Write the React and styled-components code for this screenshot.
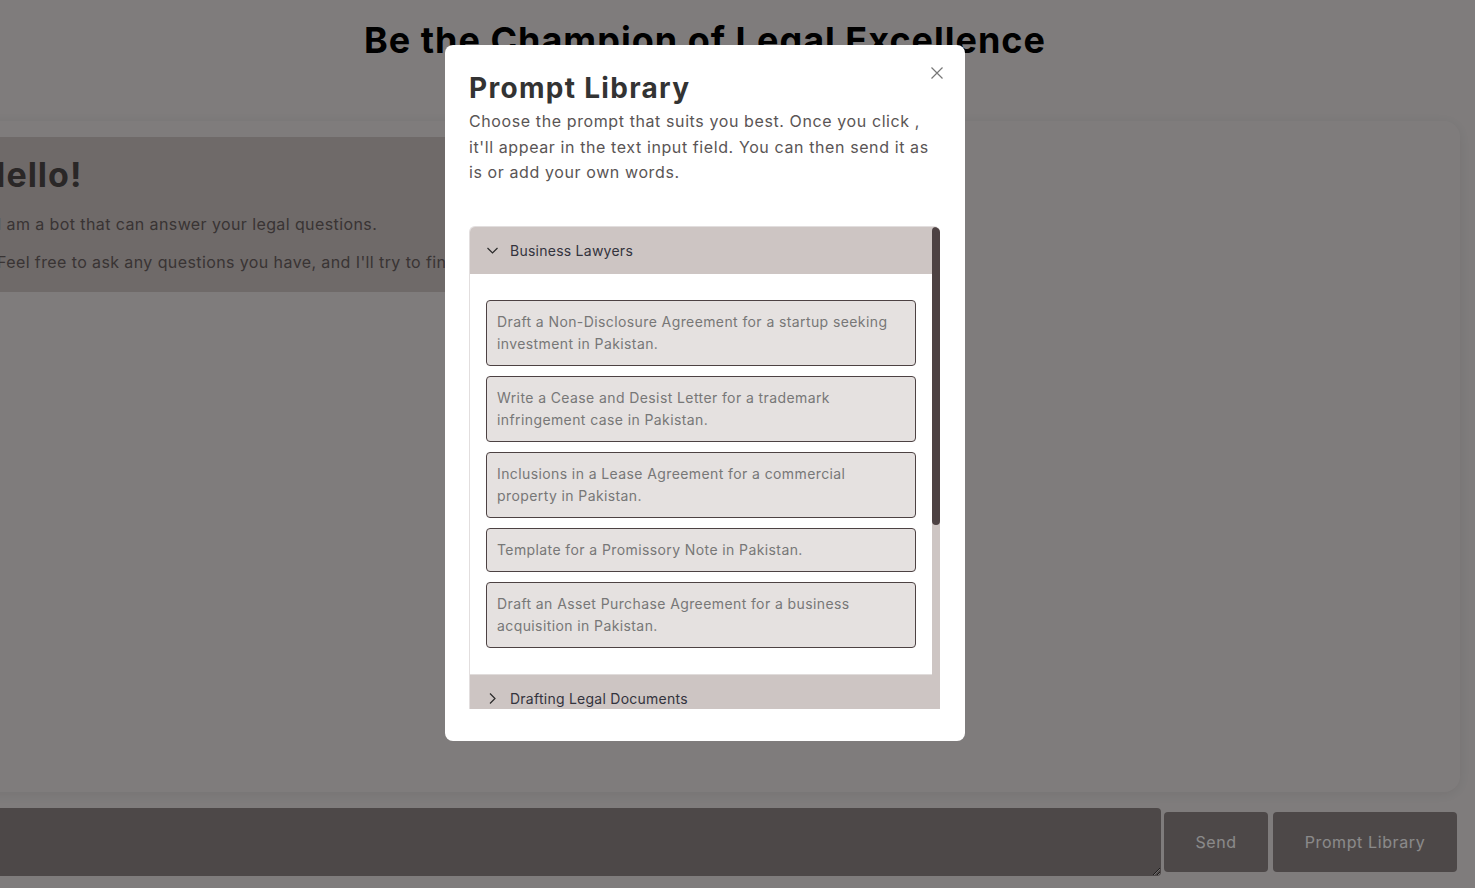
import styled, { createGlobalStyle } from "styled-components"

const GlobalStyle = createGlobalStyle`
  html, body {
    margin: 0;
    height: 100%;
    overflow: hidden;
  }
  body {
    font-family: Inter, "Noto Sans", sans-serif;
    background-color: #ebe6e6;
  }
`

const Page = styled.div`
  display: flex;
  flex-direction: column;
  box-sizing: border-box;
  width: 1510px;
  height: 888px;
  margin-left: -50px;
`

const Header = styled.header`
  display: flex;
  justify-content: center;
  height: 121px;
  padding-top: 18px;
  box-sizing: border-box;

  & h1 {
    margin: 0;
    font-size: 36px;
    line-height: 44px;
    font-weight: 700;
    letter-spacing: 1px;
    color: #000;
  }
`

const ChatCard = styled.section`
  box-sizing: border-box;
  height: 671px;
  padding: 16px 16px 16px 31px;
  border-radius: 16px;
  background-color: #ebe6e6;
  box-shadow: 0 2px 14px rgba(0, 0, 0, 0.08);
`

const BotMessage = styled.div`
  width: fit-content;
  padding: 18px 16px 19px;
  background-color: #cdc5c3;
  color: #6a6060;

  & h2 {
    margin: 0 0 18px -17px;
    font-size: 34px;
    line-height: 40px;
    font-weight: 700;
    letter-spacing: 1px;
    color: #4e4848;
  }

  & p {
    margin: 0;
    font-size: 16px;
    line-height: 22px;
    letter-spacing: 0.4px;
  }

  & p + p {
    margin-top: 16px;
  }
`

const InputRow = styled.form`
  display: flex;
  align-items: center;
  gap: 5px;
  margin-top: 16px;
  padding-right: 3px;
`

const MessageInput = styled.textarea`
  flex: 1;
  height: 68px;
  margin-right: -2px;
  box-sizing: border-box;
  border: none;
  border-radius: 0 4px 4px 0;
  background-color: #8f8585;
  font-family: inherit;
  outline: none;
`

const ActionButton = styled.button`
  width: ${(p) => p.$width}px;
  height: 60px;
  border: none;
  border-radius: 4px;
  background-color: #8f8585;
  color: #fff;
  font-family: inherit;
  font-size: 16px;
  letter-spacing: 0.6px;
`

const Backdrop = styled.div`
  position: fixed;
  inset: 0;
  display: flex;
  justify-content: center;
  align-items: flex-start;
  padding: 45px 65px 0 0;
  background-color: rgba(0, 0, 0, 0.46);
`

const Modal = styled.div`
  position: relative;
  box-sizing: border-box;
  width: 520px;
  padding: 26px 25px 32px 24px;
  border-radius: 8px;
  background-color: #fff;

  & h2 {
    margin: 0 0 4px;
    font-size: 28px;
    line-height: 34px;
    font-weight: 700;
    letter-spacing: 1.3px;
    color: #333;
  }

  & p {
    margin: 0 0 40px;
    font-size: 16px;
    line-height: 25.5px;
    letter-spacing: 0.6px;
    color: #5a5555;
  }
`

const CloseButton = styled.button`
  position: absolute;
  top: 20px;
  right: 20px;
  display: flex;
  padding: 2px;
  border: none;
  background: none;
`

const Library = styled.div`
  display: flex;
  height: 482px;
  overflow: hidden;
  border: 1px solid #e2dede;
  border-right: none;
  border-bottom: none;
  border-radius: 6px 6px 0 0;
`

const LibraryViewport = styled.div`
  flex: 1;
  overflow: hidden;
`

const ScrollTrack = styled.div`
  flex: none;
  width: 8px;
  background-color: #cdc5c3;
`

const ScrollThumb = styled.div`
  height: 298px;
  border-radius: 4px;
  background-color: #4d4243;
`

const Section = styled.div`
  border-bottom: 1px solid #e0dcdb;
`

const SectionHeader = styled.button`
  display: flex;
  align-items: center;
  gap: 12px;
  width: 100%;
  height: 47px;
  padding: 0 17px;
  border: none;
  background-color: #cdc5c3;
  color: #33333d;
  font-family: inherit;
  font-size: 14px;
  letter-spacing: 0.25px;
  text-align: left;
`

const SectionBody = styled.div`
  display: flex;
  flex-direction: column;
  gap: 10px;
  padding: 26px 16px;
  background-color: #fff;
`

const PromptItem = styled.div`
  padding: 10px;
  border: 1px solid #4d4243;
  border-radius: 4px;
  background-color: #e5e1e0;
  color: #777;
  font-size: 14px;
  line-height: 22px;
  letter-spacing: 0.4px;
`

const categories = [
  {
    name: "Business Lawyers",
    open: true,
    prompts: [
      "Draft a Non-Disclosure Agreement for a startup seeking investment in Pakistan.",
      "Write a Cease and Desist Letter for a trademark infringement case in Pakistan.",
      "Inclusions in a Lease Agreement for a commercial property in Pakistan.",
      "Template for a Promissory Note in Pakistan.",
      "Draft an Asset Purchase Agreement for a business acquisition in Pakistan.",
    ],
  },
  { name: "Drafting Legal Documents" },
  { name: "Family Lawyers" },
  { name: "Property Lawyers" },
  { name: "Criminal Lawyers" },
  { name: "Tax Lawyers" },
  { name: "Employment Lawyers" },
  { name: "Immigration Lawyers" },
]

function Chevron({ open }) {
  return (
    <svg width="11" height="11" viewBox="0 0 11 11" fill="none" stroke="#2a2a2a" strokeWidth="1.2">
      {open ? <path d="M0.5 3 L5.5 8 L10.5 3" /> : <path d="M3 0.5 L8 5.5 L3 10.5" />}
    </svg>
  )
}

export default function App() {
  return (
    <>
      <GlobalStyle />
      <Page>
        <Header>
          <h1>Be the Champion of Legal Excellence</h1>
        </Header>
        <ChatCard>
          <BotMessage>
            <h2>Hello!</h2>
            <p>I am a bot that can answer your legal questions.</p>
            <p>Feel free to ask any questions you have, and I'll try to find the best answer for you.</p>
          </BotMessage>
        </ChatCard>
        <InputRow onSubmit={(e) => e.preventDefault()}>
          <MessageInput />
          <ActionButton type="submit" $width={104}>
            Send
          </ActionButton>
          <ActionButton type="button" $width={184}>
            Prompt Library
          </ActionButton>
        </InputRow>
      </Page>

      <Backdrop>
        <Modal>
          <CloseButton aria-label="Close">
            <svg width="12" height="12" viewBox="0 0 12 12" stroke="#777" strokeWidth="1.2">
              <path d="M0.5 0.5 L11.5 11.5 M11.5 0.5 L0.5 11.5" />
            </svg>
          </CloseButton>
          <h2>Prompt Library</h2>
          <p>
            Choose the prompt that suits you best. Once you click , it'll appear in the text input field. You can then
            send it as is or add your own words.
          </p>
          <Library>
            <LibraryViewport>
              {categories.map((c) => (
                <Section key={c.name}>
                  <SectionHeader>
                    <Chevron open={c.open} />
                    {c.name}
                  </SectionHeader>
                  {c.open && (
                    <SectionBody>
                      {c.prompts.map((t) => (
                        <PromptItem key={t}>{t}</PromptItem>
                      ))}
                    </SectionBody>
                  )}
                </Section>
              ))}
            </LibraryViewport>
            <ScrollTrack>
              <ScrollThumb />
            </ScrollTrack>
          </Library>
        </Modal>
      </Backdrop>
    </>
  )
}
